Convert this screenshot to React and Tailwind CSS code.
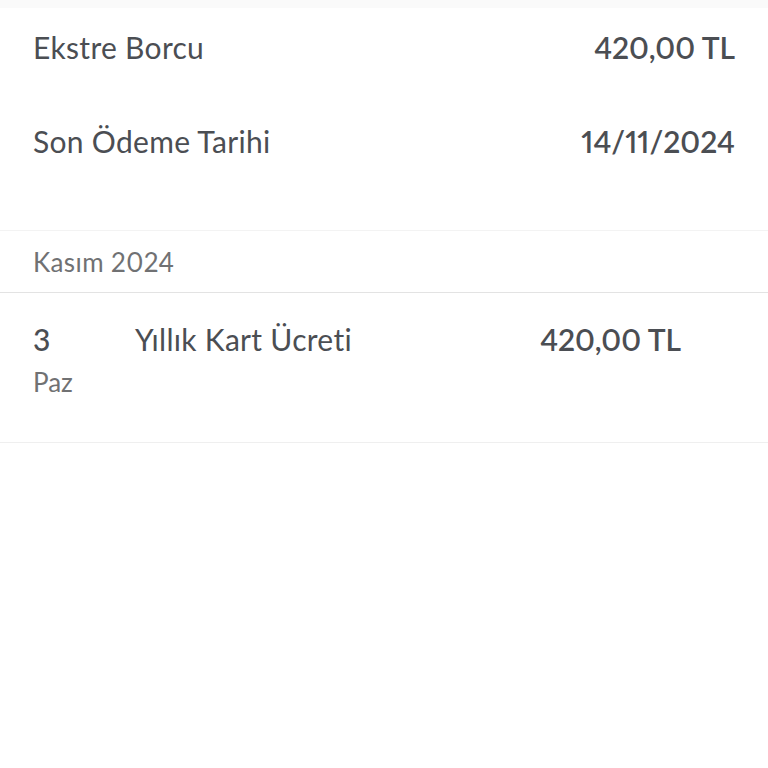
import React from "react";

function SummaryRow({ label, value, className }) {
  return (
    <div className={`flex items-center justify-between px-[33px] ${className}`}>
      <span className="text-[30px] tracking-[0.3px] text-[#4b4e53]">{label}</span>
      <span className="text-[30px] font-semibold proportional-nums text-[#4b4e53]">{value}</span>
    </div>
  );
}

export default function App() {
  return (
    <div className="min-h-[768px] bg-white" style={{ fontFamily: "Lato, 'Noto Sans', sans-serif" }}>
      <div className="h-2 bg-[#fafafa]" />
      <SummaryRow label="Ekstre Borcu" value="420,00 TL" className="h-[86px] pb-2" />
      <SummaryRow label="Son Ödeme Tarihi" value="14/11/2024" className="h-[94px]" />
      <div className="h-[42px]" />
      <div className="border-t border-[#f3f3f3] h-[62px] flex items-center px-[33px] pt-px">
        <span className="text-[26px] tracking-[0.4px] proportional-nums text-[#707173]">Kasım 2024</span>
      </div>
      <div className="border-t border-[#e3e3e3] border-b border-b-[#efefef] h-[151px] flex pl-[33px] pr-[87px] pt-[28px]">
        <div className="w-[102px] flex flex-col">
          <span className="text-[30px] leading-[36px] font-medium text-[#4b4e53]">3</span>
          <span className="mt-[9px] text-[26px] leading-[32px] text-[#707173]">Paz</span>
        </div>
        <span className="flex-1 text-[30px] leading-[36px] tracking-[0.3px] text-[#4b4e53]">Yıllık Kart Ücreti</span>
        <span className="text-[30px] leading-[36px] font-semibold proportional-nums text-[#4b4e53]">420,00 TL</span>
      </div>
    </div>
  );
}
